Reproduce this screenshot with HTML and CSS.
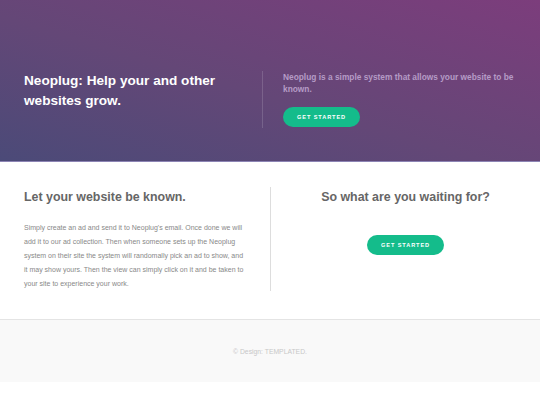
FILE: index.html
```html
<!DOCTYPE html>
<html>
<head>
<meta charset="utf-8">
<link rel="stylesheet" href="styles.css">
</head>
<body>
<header class="banner">
  <div class="banner-inner">
    <h1 class="banner-title">Neoplug: Help your and other websites grow.</h1>
    <div class="banner-side">
      <p class="banner-text">Neoplug is a simple system that allows your website to be known.</p>
      <a class="btn" href="#">GET STARTED</a>
    </div>
  </div>
</header>
<section class="main">
  <div class="col col-left">
    <h2 class="heading">Let your website be known.</h2>
    <p class="body-text">Simply create an ad and send it to Neoplug's email. Once done we will add it to our ad collection. Then when someone sets up the Neoplug system on their site the system will randomally pick an ad to show, and it may show yours. Then the view can simply click on it and be taken to your site to experience your work.</p>
  </div>
  <div class="col col-right">
    <h2 class="heading">So what are you waiting for?</h2>
    <a class="btn" href="#">GET STARTED</a>
  </div>
</section>
<footer class="footer">
  <p class="copy">© Design: TEMPLATED.</p>
</footer>
</body>
</html>
```

FILE: styles.css
```css
* { box-sizing: border-box; }
html, body { margin: 0; padding: 0; background: #fff; }
body { font-family: "Liberation Sans", Arial, sans-serif; }

.banner {
  height: 162px;
  background: linear-gradient(to top right, #4b4a78 0%, #644777 45%, #7c3d7c 100%);
  border-bottom: 1px solid #8c84b4;
  padding-top: 71px;
}
.banner-inner {
  display: flex;
  padding: 0 24px;
}
.banner-title {
  width: 238px;
  margin: 0;
  color: #fff;
  font-size: 13.6px;
  line-height: 20px;
  font-weight: bold;
}
.banner-side {
  flex: 1;
  border-left: 1px solid rgba(255,255,255,0.15);
  padding-left: 20px;
  height: 57px;
}
.banner-text {
  margin: 0 0 10px 0;
  color: #b59bc6;
  font-size: 8.35px;
  line-height: 12px;
  font-weight: bold;
}
.btn {
  display: inline-block;
  background: #14bc8b;
  color: #fff;
  text-decoration: none;
  font-size: 5.6px;
  font-weight: bold;
  letter-spacing: 0.9px;
  height: 20px;
  line-height: 20px;
  width: 77px;
  text-align: center;
  border-radius: 10px;
}

.main {
  display: flex;
  padding: 25px 0 28px 24px;
  border-bottom: 1px solid #e4e4e4;
}
.col-left { width: 222px; }
.col-right {
  margin-left: 24px;
  border-left: 1px solid #ddd;
  padding-left: 24px;
  width: 270px;
  padding-right: 24px;
  text-align: center;
}
.heading {
  margin: 0;
  color: #666;
  font-size: 12.4px;
  line-height: 20px;
  font-weight: bold;
}
.col-right .btn { margin-top: 28px; }
.body-text {
  margin: 14px 0 0 0;
  color: #888;
  font-size: 7px;
  line-height: 14px;
}

.footer {
  background: #f9f9f9;
  height: 62px;
  display: flex;
  align-items: center;
  justify-content: center;
}
.copy {
  margin: 0;
  color: #c8c8c8;
  font-size: 6.8px;
}
```
